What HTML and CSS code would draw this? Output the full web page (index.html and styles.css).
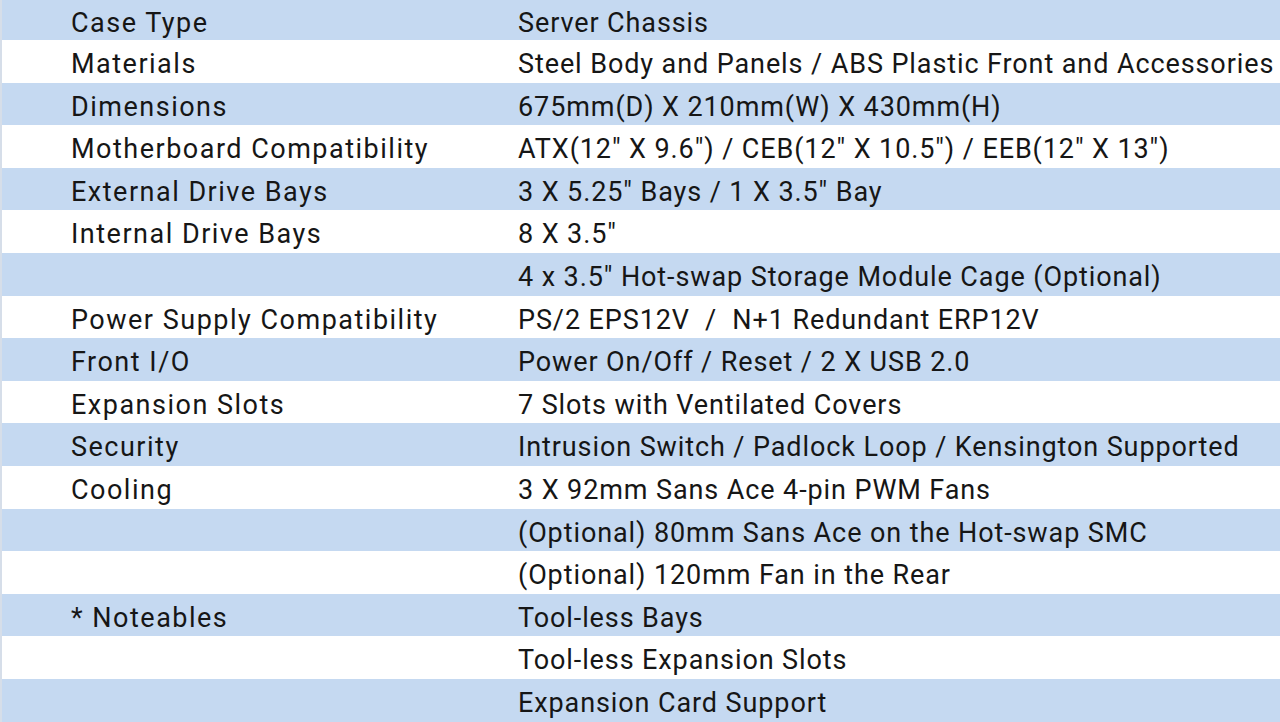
FILE: index.html
```html
<!DOCTYPE html>
<html>
<head>
<meta charset="utf-8">
<link rel="stylesheet" href="styles.css">
</head>
<body>
<div class="spec">
  <div class="row blue first"><div class="k">Case Type</div><div class="v">Server Chassis</div></div>
  <div class="row white"><div class="k">Materials</div><div class="v">Steel Body and Panels / ABS Plastic Front and Accessories</div></div>
  <div class="row blue"><div class="k">Dimensions</div><div class="v">675mm(D) X 210mm(W) X 430mm(H)</div></div>
  <div class="row white"><div class="k">Motherboard Compatibility</div><div class="v">ATX(12" X 9.6") / CEB(12" X 10.5") / EEB(12" X 13")</div></div>
  <div class="row blue"><div class="k">External Drive Bays</div><div class="v">3 X 5.25" Bays / 1 X 3.5" Bay</div></div>
  <div class="row white"><div class="k">Internal Drive Bays</div><div class="v">8 X 3.5"</div></div>
  <div class="row blue"><div class="k"></div><div class="v">4 x 3.5" Hot-swap Storage Module Cage (Optional)</div></div>
  <div class="row white"><div class="k">Power Supply Compatibility</div><div class="v">PS/2 EPS12V&nbsp; /&nbsp; N+1 Redundant ERP12V</div></div>
  <div class="row blue"><div class="k">Front I/O</div><div class="v">Power On/Off / Reset / 2 X USB 2.0</div></div>
  <div class="row white"><div class="k">Expansion Slots</div><div class="v">7 Slots with Ventilated Covers</div></div>
  <div class="row blue"><div class="k">Security</div><div class="v">Intrusion Switch / Padlock Loop / Kensington Supported</div></div>
  <div class="row white"><div class="k">Cooling</div><div class="v">3 X 92mm Sans Ace 4-pin PWM Fans</div></div>
  <div class="row blue"><div class="k"></div><div class="v">(Optional) 80mm Sans Ace on the Hot-swap SMC</div></div>
  <div class="row white"><div class="k"></div><div class="v">(Optional) 120mm Fan in the Rear</div></div>
  <div class="row blue"><div class="k">* Noteables</div><div class="v">Tool-less Bays</div></div>
  <div class="row white"><div class="k"></div><div class="v">Tool-less Expansion Slots</div></div>
  <div class="row blue"><div class="k"></div><div class="v">Expansion Card Support</div></div>
</div>
</body>
</html>
```
FILE: styles.css
```css
html, body {
  margin: 0;
  padding: 0;
  background: #ffffff;
}
.spec {
  width: 1280px;
  height: 722px;
  overflow: hidden;
  border-left: 2px solid #d6dee9;
  box-sizing: border-box;
  font-family: Roboto, "Noto Sans", sans-serif;
  font-size: 27px;
  letter-spacing: 0.85px;
  color: #161616;
}
.row {
  display: grid;
  grid-template-columns: 516px 1fr;
  height: 42.6px;
  line-height: 42.6px;
  white-space: nowrap;
}
.row.first {
  height: 40px;
  line-height: 40px;
}
.blue { background: #c5d9f1; }
.white { background: #ffffff; }
.k {
  padding-left: 69px;
  padding-top: 3px;
  letter-spacing: 1.5px;
}
.v {
  padding-top: 3px;
  letter-spacing: 0.9px;
}
```
